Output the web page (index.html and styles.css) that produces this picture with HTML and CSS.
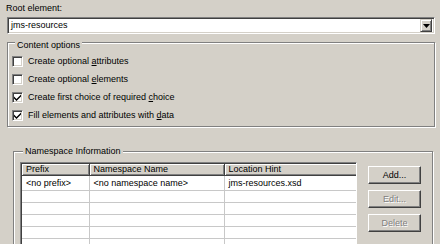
FILE: index.html
```html
<!DOCTYPE html>
<html lang="en">
<head>
    <meta charset="UTF-8">
    <title>New XML File</title>
    <link rel="stylesheet" href="styles.css">
</head>
<body>
<div class="page">
    <div class="field-label">Root element:</div>
    <div class="combo">
        <span class="combo-text">jms-resources</span>
        <span class="combo-btn">
            <svg width="7" height="4" viewBox="0 0 7 4"><path d="M0 0h7L3.5 4z" fill="#000"/></svg>
        </span>
    </div>

    <fieldset class="group options">
        <legend class="legend-low">Content options</legend>
        <label class="check"><span class="box"></span><span>Create optional <u>a</u>ttributes</span></label>
        <label class="check"><span class="box"></span><span>Create optional <u>e</u>lements</span></label>
        <label class="check"><span class="box checked"><svg width="7" height="7" viewBox="0 0 7 7"><path d="M0 2.5l2.5 2.5L7 0.5v2L2.5 7 0 4.5z" fill="#000"/></svg></span><span>Create first choice of required <u>c</u>hoice</span></label>
        <label class="check"><span class="box checked"><svg width="7" height="7" viewBox="0 0 7 7"><path d="M0 2.5l2.5 2.5L7 0.5v2L2.5 7 0 4.5z" fill="#000"/></svg></span><span>Fill elements and attributes with <u>d</u>ata</span></label>
    </fieldset>

    <fieldset class="group ns">
        <legend>Namespace Information</legend>
        <div class="ns-body">
            <div class="grid-wrap">
                <table class="grid">
                    <colgroup>
                        <col class="col-prefix">
                        <col class="col-name">
                        <col class="col-hint">
                    </colgroup>
                    <thead>
                        <tr><th>Prefix</th><th>Namespace Name</th><th>Location Hint</th></tr>
                    </thead>
                    <tbody>
                        <tr class="first"><td>&lt;no prefix&gt;</td><td>&lt;no namespace name&gt;</td><td>jms-resources.xsd</td></tr>
                        <tr><td></td><td></td><td></td></tr>
                        <tr><td></td><td></td><td></td></tr>
                        <tr><td></td><td></td><td></td></tr>
                        <tr><td></td><td></td><td></td></tr>
                        <tr><td></td><td></td><td></td></tr>
                        <tr><td></td><td></td><td></td></tr>
                    </tbody>
                </table>
            </div>
            <div class="buttons">
                <button class="btn">Add...</button>
                <button class="btn" disabled>Edit...</button>
                <button class="btn" disabled>Delete</button>
            </div>
        </div>
    </fieldset>
</div>
</body>
</html>
```

FILE: styles.css
```css
:root {
    --face: #d4d0c8;
    --shadow: #808080;
    --dark: #404040;
}

html, body {
    margin: 0;
    height: 100%;
    overflow: hidden;
}

body {
    background: var(--face);
    font-family: 'Liberation Sans', Arial, sans-serif;
    font-size: 9px;
    line-height: 11px;
    color: #000;
}

.page {
    padding-top: 3px;
}

.field-label {
    padding-left: 6px;
}

/* combo box */
.combo {
    margin: 3px 5px 0 7px;
    height: 13px;
    display: flex;
    align-items: center;
    background: #fff;
    border: 1px solid;
    border-color: var(--shadow) #fff #fff var(--shadow);
    box-shadow: inset 1px 1px 0 var(--dark), inset -1px -1px 0 var(--face);
    padding: 1px 2px 1px 2px;
}

.combo-text {
    flex: 1;
    padding-left: 1px;
}

.combo-btn {
    width: 10px;
    height: 11px;
    display: flex;
    align-items: center;
    justify-content: center;
    background: var(--face);
    border: 1px solid;
    border-color: var(--face) var(--dark) var(--dark) var(--face);
    box-shadow: inset 1px 1px 0 #fff, inset -1px -1px 0 var(--shadow);
}

/* group boxes */
.group {
    border: 1px solid var(--shadow);
    box-shadow: inset 1px 1px 0 #fff, 1px 1px 0 #fff;
    min-width: 0;
}

.group legend {
    background: var(--face);
    padding: 0 2px;
    margin-left: 3px;
}

.group legend.legend-low {
    padding-top: 6px;
}

.options {
    margin: 0 5px 0 7px;
    padding: 1px 0 2px 4px;
}

.check {
    display: flex;
    align-items: center;
    height: 18px;
}

.box {
    width: 7px;
    height: 7px;
    margin-right: 5px;
    background: #fff;
    border: 1px solid;
    border-color: var(--shadow) #fff #fff var(--shadow);
    box-shadow: inset 1px 1px 0 var(--dark), inset -1px -1px 0 var(--face);
    padding: 1px;
    display: flex;
    align-items: center;
    justify-content: center;
}

.ns {
    margin: 19px 7px 0 13px;
    padding: 5px 9px 0 6px;
}

.ns-body {
    display: flex;
    gap: 11px;
}

/* namespace table */
.grid-wrap {
    width: 334px;
    height: 110px;
    background: #fff;
    border: 1px solid;
    border-color: var(--shadow) #fff #fff var(--shadow);
    box-shadow: inset 1px 1px 0 var(--dark);
    padding: 1px 0 0 1px;
    overflow: hidden;
}

.grid {
    border-collapse: collapse;
    table-layout: fixed;
    width: 336px;
}

.col-prefix { width: 67px; }
.col-name { width: 135px; }
.col-hint { width: 134px; }

.grid th {
    font-weight: normal;
    text-align: left;
    height: 10px;
    padding: 0 0 0 4px;
    background: var(--face);
    border-right: 1px solid var(--dark);
    border-bottom: 1px solid var(--dark);
    box-shadow: inset 1px 1px 0 #fff, inset -1px -1px 0 var(--shadow);
    white-space: nowrap;
    overflow: hidden;
}

.grid td {
    height: 11px;
    padding: 0 0 0 4px;
    border-right: 1px solid #c8c8c8;
    border-bottom: 1px solid #c8c8c8;
    white-space: nowrap;
    overflow: hidden;
}

.grid tr.first td {
    height: 13px;
    padding-top: 1px;
    vertical-align: middle;
}

/* buttons */
.buttons {
    display: flex;
    flex-direction: column;
    gap: 6px;
    padding-top: 4px;
}

.btn {
    width: 53px;
    height: 18px;
    padding: 0;
    font: inherit;
    color: #000;
    background: var(--face);
    border: 1px solid;
    border-color: #fff var(--dark) var(--dark) #fff;
    box-shadow: inset -1px -1px 0 var(--shadow);
    border-radius: 0;
}

.btn:disabled {
    color: var(--shadow);
    text-shadow: 1px 1px 0 #fff;
}
```
